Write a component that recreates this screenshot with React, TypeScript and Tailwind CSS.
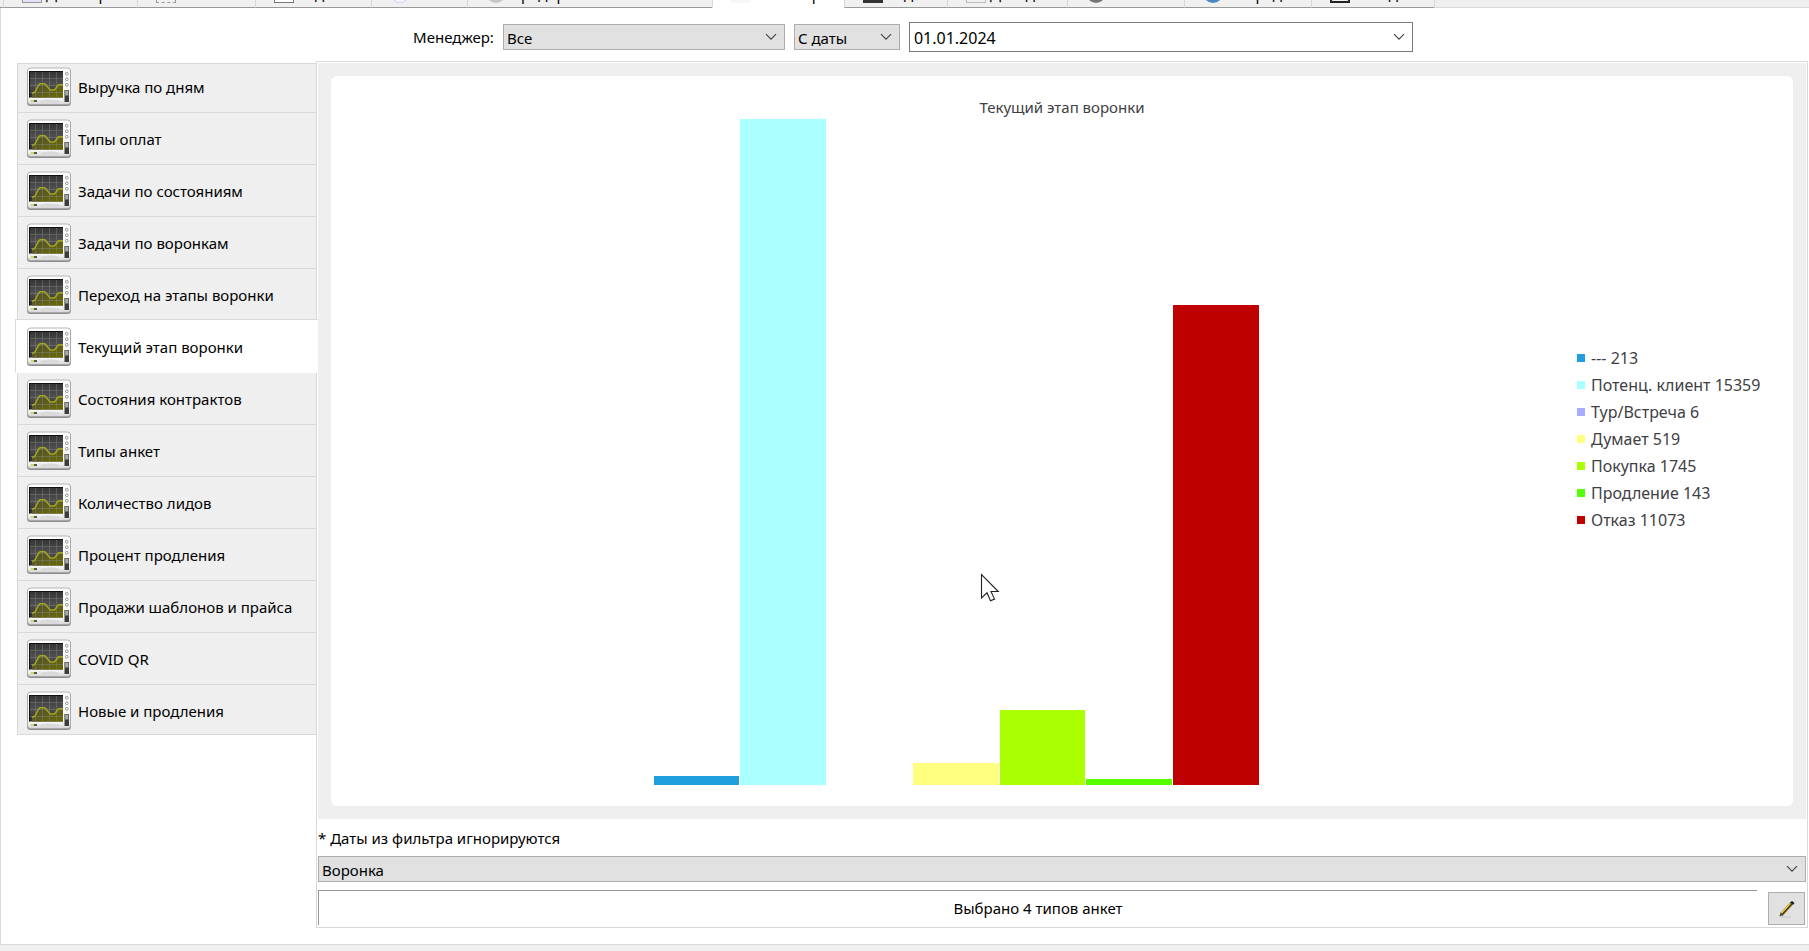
import { useState } from 'react'
import type { ReactNode } from 'react'

const reports = [
  'Выручка по дням',
  'Типы оплат',
  'Задачи по состояниям',
  'Задачи по воронкам',
  'Переход на этапы воронки',
  'Текущий этап воронки',
  'Состояния контрактов',
  'Типы анкет',
  'Количество лидов',
  'Процент продления',
  'Продажи шаблонов и прайса',
  'COVID QR',
  'Новые и продления',
]

const stages = [
  { label: '---', value: 213, color: 'bg-[#209fdf]' },
  { label: 'Потенц. клиент', value: 15359, color: 'bg-[#aaffff]' },
  { label: 'Тур/Встреча', value: 6, color: 'bg-[#aaaaff]' },
  { label: 'Думает', value: 519, color: 'bg-[#ffff7f]' },
  { label: 'Покупка', value: 1745, color: 'bg-[#aaff00]' },
  { label: 'Продление', value: 143, color: 'bg-[#55ff00]' },
  { label: 'Отказ', value: 11073, color: 'bg-[#be0000]' },
]

const maxValue = Math.max(...stages.map(s => s.value))

// percent of the tallest bar, to one decimal
function barHeight(value: number) {
  return Math.floor((value / maxValue) * 1000) / 10
}

interface TopTab {
  label: string
  width: string
  icon: string
  active?: boolean
}

const topTabs: TopTab[] = [
  { label: 'Договор', width: 'w-[134px]', icon: 'border border-[#999] bg-[#dfe3f5]' },
  { label: 'Касса', width: 'w-[118px]', icon: 'border border-dashed border-[#999]' },
  { label: 'Задачи', width: 'w-[116px]', icon: 'border border-[#777] bg-white' },
  { label: 'Анкеты', width: 'w-[96px]', icon: 'border border-[#ccd3e8] bg-[#f6f8ff] rounded-full' },
  { label: 'Предприятия', width: 'w-[245px]', icon: 'bg-[#c4c4c4] rounded-full' },
  { label: 'Мониторинг', width: 'w-[132px]', icon: 'bg-[#f7f7f7]', active: true },
  { label: 'Задания', width: 'w-[103px]', icon: 'bg-[#333]' },
  { label: 'Доходы', width: 'w-[120px]', icon: 'border border-[#bbb]' },
  { label: 'Звонки', width: 'w-[117px]', icon: 'bg-[#777] rounded-full' },
  { label: 'Очередь', width: 'w-[127px]', icon: 'border-3 border-[#4a86c0] rounded-full' },
  { label: 'Склады', width: 'w-[123px]', icon: 'border-2 border-[#222]' },
]

function Chevron() {
  return (
    <svg className="pointer-events-none absolute right-2 top-1/2 -translate-y-1/2" width="12" height="8" viewBox="0 0 12 8" aria-hidden="true">
      <path d="M1 1.2 6 6.2 11 1.2" fill="none" stroke="#444" strokeWidth="1.2" />
    </svg>
  )
}

function Dropdown({ id, label, className, children }: { id: string; label?: string; className: string; children: ReactNode }) {
  return (
    <div className={`relative ${className}`}>
      <select
        id={id}
        aria-label={label}
        className="block h-[26px] w-full appearance-none border border-[#adadad] bg-[#e1e1e1] pl-[3px] pr-6 pt-px leading-6 outline-none"
      >
        {children}
      </select>
      <Chevron />
    </div>
  )
}

function MonitorIcon() {
  return (
    <svg className="shrink-0" width="46" height="40" viewBox="0 0 46 40" aria-hidden="true">
      <defs>
        <linearGradient id="case" x1="0" y1="0" x2="0" y2="1">
          <stop offset="0" stopColor="#fdfdfd" />
          <stop offset="0.85" stopColor="#f4f4f4" />
          <stop offset="1" stopColor="#d4d4d4" />
        </linearGradient>
        <linearGradient id="screen" x1="0" y1="0" x2="0" y2="1">
          <stop offset="0" stopColor="#333" />
          <stop offset="0.5" stopColor="#505050" />
          <stop offset="1" stopColor="#2c2c2c" />
        </linearGradient>
        <linearGradient id="wave" x1="0" y1="0" x2="1" y2="1">
          <stop offset="0" stopColor="#4f4f38" />
          <stop offset="1" stopColor="#6a6a00" />
        </linearGradient>
      </defs>
      <rect x="1" y="1.5" width="44" height="37.5" rx="3.5" fill="#8d8d8d" />
      <rect x="1.5" y="1" width="43" height="36.5" rx="3" fill="url(#case)" stroke="#a5a5a5" strokeWidth="0.8" />
      <rect x="3" y="4" width="34" height="26.5" fill="url(#screen)" />
      <path d="M6 26.500 9 25 13 17.500Q13.500 16.800 14.500 16.800H18Q19 16.800 19.600 17.500L23 21.800Q24 23 25 23H27.500Q28.500 23 29.200 22L32 18.500Q32.500 17.800 33.500 17.800H37V30.500H6z" fill="url(#wave)" />
      <path d="M9.500 5v25M16.500 5v25M23.500 5v25M30.500 5v25M4 11.500h33M4 18.500h33M4 25.500h33" stroke="#8a8a8a" strokeWidth="0.4" fill="none" />
      <path d="M3 4.500h34M3.500 4v26.500" stroke="#111" fill="none" />
      <path d="M6 26.500 9 25 13 17.500Q13.500 16.800 14.500 16.800H18Q19 16.800 19.600 17.500L23 21.800Q24 23 25 23H27.500Q28.500 23 29.200 22L32 18.500Q32.500 17.800 33.500 17.800H37" fill="none" stroke="#a6a620" strokeWidth="1.500" />
      <ellipse cx="24" cy="34.500" rx="10" ry="2" fill="#dadada" />
      <path d="M5 34h3" stroke="#c4d63c" strokeWidth="1.600" />
      <path d="M8 34h3" stroke="#333" strokeWidth="1.600" />
      <g fill="#fff" stroke="#888" strokeWidth="0.9">
        <rect x="39.500" y="5.500" width="2.500" height="2.500" rx="0.8" />
        <rect x="39.500" y="11" width="2.500" height="2.500" rx="0.8" />
        <rect x="39.500" y="16.500" width="2.500" height="2.500" rx="0.8" />
      </g>
      <rect x="38.500" y="23" width="4.500" height="12" fill="#3c3c3c" />
      <rect x="39" y="23.500" width="3.500" height="5" fill="#a9a9a9" stroke="#666" strokeWidth="0.5" />
    </svg>
  )
}

function PencilIcon() {
  return (
    <svg width="18" height="18" viewBox="0 0 18 18" aria-hidden="true">
      <path d="M2 17h11" stroke="#c4c4c4" />
      <path d="M3.500 14.500 13.500 3.500" stroke="#8a6d14" strokeWidth="3.400" />
      <path d="M3.500 13.500 12.500 3.500" stroke="#f0d255" strokeWidth="1.600" />
      <path d="M4.500 14 13.500 4" stroke="#2a2210" strokeWidth="1.100" />
      <path d="M12 2.500 14 1l2.500 2-1.500 2z" fill="#1c1c1c" />
      <path d="M1.500 16.500 2.500 12.500 5.500 15z" fill="#4a4a4a" />
    </svg>
  )
}

function Pointer() {
  return (
    <svg className="pointer-events-none absolute left-[649px] top-[497px]" width="20" height="30" viewBox="0 0 20 30" aria-hidden="true">
      <path d="M1.500 1.500V25L7 19.800l3.500 8 4-1.700-3.500-7.600h7.300z" fill="#fff" stroke="#222" strokeWidth="1.100" />
    </svg>
  )
}

export default function App() {
  const [report, setReport] = useState(5)
  const [date, setDate] = useState('01.01.2024')

  return (
    <div className="flex min-h-screen flex-col bg-[#efefef] font-['Noto_Sans','DejaVu_Sans',sans-serif] text-[15px] text-black">
      <nav className="flex h-2 items-end overflow-hidden">
        <div className="h-2 w-[3px] border-b border-[#999]" />
        {topTabs.map(t => (
          <button
            key={t.label}
            className={`flex h-10 shrink-0 items-end gap-1 whitespace-nowrap border-b border-l border-l-[#d9d9d9] pb-1 pl-[18px] leading-4 ${t.width} ${
              t.active ? 'border-b-white bg-white' : 'border-b-[#999] bg-[#f0f0f0]'
            }`}
          >
            <span className={`size-5 shrink-0 ${t.icon}`} />
            <span className="pb-px">{t.label}</span>
          </button>
        ))}
        <div className="h-2 flex-1 border-b border-l border-[#d9d9d9]" />
      </nav>

      <div className="flex flex-1 flex-col border-b border-l border-[#d9d9d9] bg-white pb-4">
        <div className="flex h-[53px] items-center justify-center gap-[9px] pl-4 pt-[5px]">
          <label htmlFor="manager">Менеджер:</label>
          <Dropdown id="manager" className="w-[282px]">
            <option>Все</option>
          </Dropdown>
          <Dropdown id="period" label="Период" className="w-[106px]">
            <option>С даты</option>
          </Dropdown>
          <div className="relative w-[504px]">
            <input
              type="text"
              aria-label="Дата"
              value={date}
              onChange={e => setDate(e.target.value)}
              className="block h-[30px] w-full border border-[#7a7a7a] bg-white pl-1 pt-px text-base outline-none"
            />
            <Chevron />
          </div>
        </div>

        <div className="flex flex-1 pr-px">
          <nav className="group flex w-[315px] shrink-0 flex-col pl-4 pt-[2px]">
            {reports.map((r, i) => (
              <button
                key={r}
                onClick={() => setReport(i)}
                className={`flex items-start border-l border-t border-[#d9d9d9] text-left first:h-[49px] first:pt-[3px] last:h-[51px] last:border-b ${
                  report === i
                    ? 'relative -my-px -ml-[2px] -mr-[2px] h-[54px] border-b border-b-white bg-white pl-[10px] pt-[7px]'
                    : 'h-[52px] bg-[#efefef] pl-2 pt-[6px]'
                }`}
              >
                <span className="flex items-center gap-[6px]">
                  <MonitorIcon />
                  {r}
                </span>
              </button>
            ))}
          </nav>

          <main className="flex min-w-0 flex-1 flex-col border border-[#d9d9d9] p-px">
            <div className="flex flex-1 bg-[#efefef] p-[13px]">
              <section className="relative flex flex-1 flex-col rounded-md bg-white px-5 pb-[21px] pt-[19px] text-[#404044]">
                <h1 className="text-center leading-6">Текущий этап воронки</h1>
                <div className="flex flex-1 gap-4">
                  <div className="flex flex-1 items-end justify-center">
                    <div className="flex h-full w-1/2 items-end gap-px">
                      {stages.map(s => (
                        <div key={s.label} className={`flex-1 ${s.color}`} style={{ height: `${barHeight(s.value)}%` }} />
                      ))}
                    </div>
                  </div>
                  <ul className="flex w-[196px] flex-col justify-center pb-[26px] text-base">
                    {stages.map(s => (
                      <li key={s.label} className="flex items-center gap-[6px] whitespace-nowrap leading-[27px]">
                        <span className={`size-2 shrink-0 ${s.color}`} />
                        {s.label} {s.value}
                      </li>
                    ))}
                  </ul>
                </div>
                <Pointer />
              </section>
            </div>

            <p className="pb-[6px] pt-[7px] leading-6">* Даты из фильтра игнорируются</p>
            <Dropdown id="funnel" label="Воронка" className="w-full">
              <option>Воронка</option>
            </Dropdown>
            <div className="mt-2 flex items-end justify-between gap-[11px] pb-px pr-px">
              <div className="flex h-[35px] flex-1 items-center justify-center border-l border-t border-[#999]">Выбрано 4 типов анкет</div>
              <button aria-label="Изменить" className="flex h-[33px] w-[37px] items-center justify-center border border-[#adadad] bg-[#e1e1e1]">
                <PencilIcon />
              </button>
            </div>
          </main>
        </div>
      </div>
      <div className="h-[6px]" />
    </div>
  )
}
